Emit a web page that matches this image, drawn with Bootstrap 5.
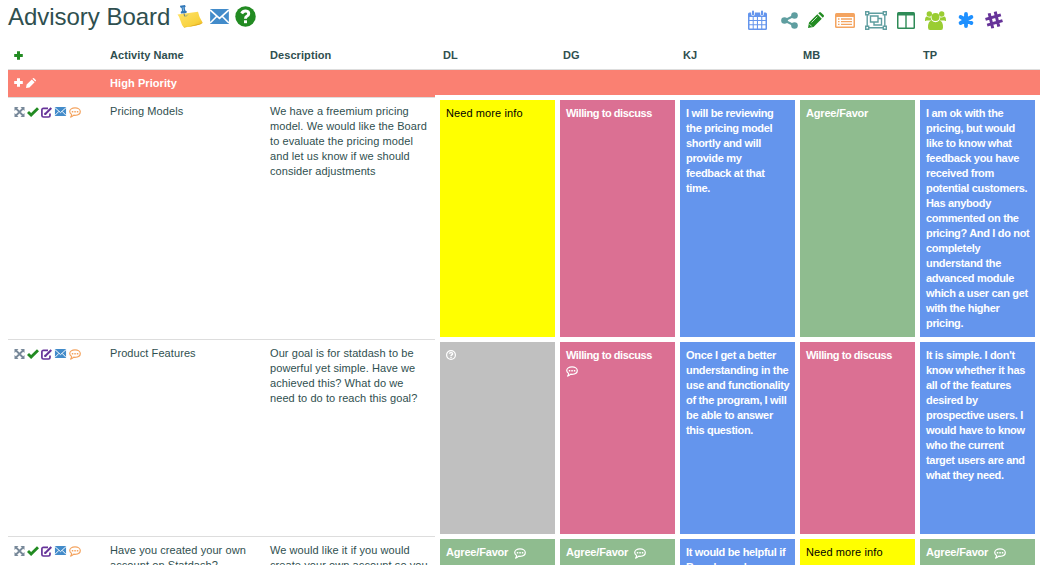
<!DOCTYPE html>
<html lang="en">
<head>
<meta charset="utf-8">
<title>Advisory Board</title>
<meta name="viewport" content="width=device-width, initial-scale=1">
<link rel="stylesheet" href="https://cdn.jsdelivr.net/npm/bootstrap@5.3.0/dist/css/bootstrap.min.css">
<style>
body{font-family:"Liberation Sans",Arial,sans-serif;font-size:11px;line-height:15px;color:#2f4f4f;background:#fff;height:565px;letter-spacing:.08px}
svg{display:block;flex:none;overflow:visible}
.page-top{height:40px;padding:0 37px 0 8px}
.board-title{font-size:24px;line-height:34px;letter-spacing:-.03px;width:163px;color:#2f4f4f}
.tools{height:40px}
.board-row{display:grid;grid-template-columns:102px 160px 165px repeat(4,120px) 125px;margin-left:8px;white-space:nowrap}
.head-row{height:29px;padding-top:8px;font-weight:bold}
.head-row .who{padding-left:8px}
.group-row{height:28px;border-top:1px solid #ddd;background:salmon;color:#fff;padding-top:6px;font-weight:bold}
.tall{height:242px}.mid{height:197px}.last{height:29px;overflow:hidden}
.meta{border-top:1px solid #ddd;padding-top:6px}
.acts{padding-left:6px;padding-top:9px;gap:2px}
.vote{border:solid #fff;border-width:5px 0 0 5px;margin-top:-2px;margin-bottom:2px;padding:6px 0 0 6px;font-weight:bold;color:#fff;letter-spacing:-.32px}
.last .vote{margin-top:0;border-top-width:3px;margin-bottom:0}
.vote:last-child{border-right-width:5px}
.more{background:#ff0;color:#000;font-weight:normal;letter-spacing:.1px}
.discuss{background:#db7093;letter-spacing:-.42px}.note{background:#6495ed}.agree{background:#8fbc8f;letter-spacing:-.18px}.none{background:#c0c0c0}
.unsure-icon{margin-top:2px}
</style>
<script src="https://cdn.jsdelivr.net/npm/bootstrap@5.3.0/dist/js/bootstrap.bundle.min.js"></script>
</head>
<body class="overflow-hidden">
<svg width="0" height="0" class="position-absolute">
<symbol id="plus" viewBox="0 0 9 9"><path fill="currentColor" d="M3 .3h3V3h2.800v3H6v2.700H3V6H.2V3H3z"/></symbol>
<symbol id="pencil" viewBox="0 0 16 16"><path fill="currentColor" d="M0 16l1-5.500L9.300 2.200l4.500 4.500L5.500 15zM10.300 1.300L11.200.4Q12 -.4 12.900.4L15.600 3.100Q16.400 4 15.600 4.800L14.800 5.700z"/></symbol>
<symbol id="move" viewBox="0 0 10 10"><path fill="none" stroke="#778899" stroke-width="1.800" d="M1 1l8 8M9 1L1 9"/><path fill="#778899" d="M0 0h4L0 4zM10 0v4L6 0zM0 10V6l4 4zM10 10H6l4-4z"/></symbol>
<symbol id="check" viewBox="0 0 12 10"><path fill="none" stroke="#228b22" stroke-width="2.900" d="M1 5l3.100 3L11 1.200"/></symbol>
<symbol id="edit" viewBox="0 0 11 11"><path fill="none" stroke="#663399" stroke-width="1.700" d="M7 1.300H2.500Q.9 1.300.9 3v5.500Q.9 10 2.500 10h5Q9 10 9 8.500V6.500"/><path stroke="#663399" stroke-width="2" d="M4 7.300L10.300 1"/><path fill="#663399" d="M3.300 5.500L5.500 8H3.300z"/></symbol>
<symbol id="mail" viewBox="0 0 20 16"><path fill="#428bca" d="M0 0h20v16H0z"/><path fill="none" stroke="#fff" stroke-width="1.700" d="M0 1l10 9L20 1M0 15l7.200-7.300M20 15l-7.200-7.300"/></symbol>
<symbol id="chat" viewBox="0 0 12 11"><path fill="none" stroke="currentColor" stroke-width="1.200" stroke-linejoin="round" d="M6 .8C9 .8 11.300 2.400 11.300 4.600S9 8.300 6 8.300L4.800 8.200Q3.500 9.700 1.600 10.100Q2.600 8.900 2.600 7.500C1.500 6.800.7 5.800.7 4.600C.7 2.400 3 .8 6 .8z"/><path fill="currentColor" d="M2.800 3.900h1.500v1.500H2.800zM5.300 3.900h1.500v1.500H5.300zM7.800 3.900h1.500v1.500H7.800z"/></symbol>
</svg>

<header class="page-top d-flex justify-content-between">
 <div class="d-flex">
  <h1 class="board-title text-nowrap m-0 fw-normal">Advisory Board</h1>
  <svg width="27" height="24" viewBox="0 0 27 24" style="margin:5px 0 0 6px"><defs><linearGradient id="paper" x1="0" y1="0" x2="1" y2="1"><stop offset="0" stop-color="#ffe36a"/><stop offset=".7" stop-color="#f8d23e"/><stop offset="1" stop-color="#e9ad18"/></linearGradient></defs><path fill="url(#paper)" d="M.5 9.500L21 6.800Q22 12.500 25.700 17.800Q24 20.500 7 22.600Q4.500 20 3.600 16Q2.700 12 .5 9.500z"/><path fill="#dba51b" d="M4 17Q5 20 7.200 22.600L25.700 18Q23 20.500 7 22Q5 20 4 17z"/><path fill="#b6bb70" d="M7 11l5-2-3 3z"/><path fill="#3278b9" d="M3 .7L8 0L8.700 1.700L7.700 2.500L8.300 5.400L9.800 6.300L9.400 8L4 8.600L3.700 7L5 5.800L4.600 3L3.200 2.300z"/><path stroke="#85b9e0" d="M6 2l.6 4"/><path stroke="#687d85" d="M7 8.300l.6 3"/></svg>
  <svg width="19" height="15" style="margin:9px 0 0 6px"><use href="#mail"/></svg>
  <svg width="21" height="21" viewBox="0 0 21 21" style="margin:6px 0 0 6px"><circle cx="10.500" cy="10.500" r="10.200" fill="#228b22"/><path fill="none" stroke="#fff" stroke-width="3" d="M6.700 7.500Q8 4.900 10.800 5.100Q13.800 5.400 13.700 7.800Q13.600 9.300 11.800 10.300Q10.500 11 10.500 12.700"/><path fill="#fff" d="M9 14.300h3v2.900H9z"/></svg>
 </div>
 <nav class="tools d-flex align-items-center">
  <svg width="19" height="20" viewBox="0 0 19 20"><path fill="#6495ed" d="M0 4q0-1.500 1.500-1.500h16Q19 2.500 19 4v14.500q0 1.500-1.500 1.500h-16Q0 20 0 18.500z"/><path fill="#fff" d="M1.500 7h3.200v3H1.500zm4.200 0h3.200v3H5.700zM10 7h3.200v3H10zm4.300 0h3.200v3h-3.200zM1.500 11h3.200v3.300H1.500zm4.200 0h3.200v3.300H5.700zm4.300 0h3.200v3.300H10zm4.300 0h3.200v3.300h-3.200zM1.500 15.300h3.200v3.300H1.500zm4.200 0h3.200v3.300H5.700zm4.300 0h3.200v3.300H10zm4.300 0h3.200v3.300h-3.200z"/><path stroke="#fff" stroke-width="3.600" stroke-linecap="round" d="M5 2v2.300M14 2v2.300"/><path stroke="#6495ed" stroke-width="2" stroke-linecap="round" d="M5 1.500v3M14 1.500v3"/></svg>
  <svg width="17" height="17" viewBox="0 0 17 17" style="margin-left:14px"><path fill="none" stroke="#5f9ea0" stroke-width="2.200" d="M13.500 3.500l-10 5 10 5"/><g fill="#5f9ea0"><circle cx="13.500" cy="3.500" r="3.300"/><circle cx="3.500" cy="8.500" r="3.300"/><circle cx="13.500" cy="13.500" r="3.300"/></g></svg>
  <svg width="16" height="16" viewBox="0 0 16 16" color="#228b22" style="margin-left:10px"><use href="#pencil"/><path stroke="#fff" opacity=".75" d="M3.500 10.500L9.300 4.700M1.500 12.200l2.300 2.300"/></svg>
  <svg width="20" height="15" viewBox="0 0 20 15" style="margin-left:11px"><rect width="20" height="15" rx="1.500" fill="#f4a460"/><path fill="#fff" d="M1.500 4h17v9.500h-17z"/><path stroke="#f4a460" stroke-width="1.300" d="M3 6h1.500M6 6h11M3 8.700h1.500M6 8.700h11M3 11.400h1.500M6 11.400h11"/></svg>
  <svg width="22" height="19" viewBox="0 0 22 19" style="margin-left:10px"><g fill="none" stroke="#5f9ea0" stroke-width="1.400"><path d="M4 2.200h14M4 16.800h14M2.200 4v11M19.800 4v11"/><path d="M.7.700h3v3h-3zM18.300.7h3v3h-3zM.7 15.300h3v3h-3zM18.300 15.300h3v3h-3zM5.500 5h7.500v6H5.500zM13 7.500h3.500v6.500H9V11"/></g></svg>
  <svg width="18" height="17" viewBox="0 0 18 17" style="margin-left:10px"><rect width="18" height="17" rx="1.500" fill="#2e8b57"/><path fill="#fff" d="M1.500 3.500h6.800v12H1.500zM9.700 3.500h6.800v12H9.700z"/></svg>
  <svg width="21" height="19" viewBox="0 0 21 19" style="margin-left:10px"><g fill="#9acd32"><circle cx="4.300" cy="3" r="2.700"/><circle cx="16.700" cy="3" r="2.700"/><circle cx="10.500" cy="6" r="4"/><path d="M0 9.500Q0 5.500 2 5.500Q4 7 5.700 6.200Q5.700 8.500 7 9.500H1.500Q0 10.500 0 9.500zM21 9.500Q21 5.500 19 5.500Q17 7 15.300 6.200Q15.300 8.500 14 9.500h5.500Q21 10.500 21 9.500zM5 19Q3 19 3 16.500Q3 10 6.500 9.500Q10.500 13 14.500 9.500Q18 10 18 16.500Q18 19 16 19z"/></g></svg>
  <svg width="16" height="16" viewBox="0 0 16 16" style="margin-left:12px"><path stroke="#1e90ff" stroke-width="3.800" stroke-linecap="round" d="M8 2v12M2.600 5l10.800 6M13.400 5L2.600 11"/></svg>
  <svg width="18" height="18" viewBox="0 0 18 18" style="margin:0 0 1px 11px"><g transform="rotate(-16 9 9)" fill="none" stroke="#663399" stroke-width="3"><path d="M6.200 1.200L5.500 16.600M12.500 1.200L11.800 16.600M1 6h16M1 12h16"/></g></svg>
 </nav>
</header>

<main>
<div class="board-row head-row">
 <div style="padding:3px 0 0 6px;color:#228b22"><svg width="9" height="9"><use href="#plus"/></svg></div>
 <div>Activity Name</div><div>Description</div>
 <div class="who">DL</div><div class="who">DG</div><div class="who">KJ</div><div class="who">MB</div><div class="who">TP</div>
</div>
<div class="board-row group-row">
 <div class="d-flex" style="padding:2px 0 0 6px;gap:3px"><svg width="9" height="9"><use href="#plus"/></svg><svg width="10" height="10"><use href="#pencil"/></svg></div>
 <div>High Priority</div>
</div>

<div class="board-row tall">
 <div class="meta acts d-flex align-items-start"><svg width="11" height="10"><use href="#move"/></svg><svg width="12" height="10"><use href="#check"/></svg><svg width="11" height="11"><use href="#edit"/></svg><svg width="13" height="9" viewBox="0 0 12 9"><use href="#mail" width="12" height="9"/></svg><svg width="12" height="11" color="#f4a460"><use href="#chat"/></svg></div>
 <div class="meta">Pricing Models</div>
 <div class="meta">We have a freemium pricing<br>model. We would like the Board<br>to evaluate the pricing model<br>and let us know if we should<br>consider adjustments</div>
 <div class="vote more">Need more info</div>
 <div class="vote discuss">Willing to discuss</div>
 <div class="vote note">I will be reviewing<br>the pricing model<br>shortly and will<br>provide my<br>feedback at that<br>time.</div>
 <div class="vote agree">Agree/Favor</div>
 <div class="vote note">I am ok with the<br>pricing, but would<br>like to know what<br>feedback you have<br>received from<br>potential customers.<br>Has anybody<br>commented on the<br>pricing? And I do not<br>completely<br>understand the<br>advanced module<br>which a user can get<br>with the higher<br>pricing.</div>
</div>

<div class="board-row mid">
 <div class="meta acts d-flex align-items-start"><svg width="11" height="10"><use href="#move"/></svg><svg width="12" height="10"><use href="#check"/></svg><svg width="11" height="11"><use href="#edit"/></svg><svg width="13" height="9" viewBox="0 0 12 9"><use href="#mail" width="12" height="9"/></svg><svg width="12" height="11" color="#f4a460"><use href="#chat"/></svg></div>
 <div class="meta">Product Features</div>
 <div class="meta">Our goal is for statdash to be<br>powerful yet simple. Have we<br>achieved this? What do we<br>need to do to reach this goal?</div>
 <div class="vote none"><svg width="10" height="10" viewBox="0 0 10 10" class="unsure-icon"><g fill="none" stroke="#fff"><circle cx="5" cy="5" r="4.400" stroke-width="1.200"/><path stroke-width="1.400" d="M3.300 3.700Q4 2.500 5.200 2.600Q6.700 2.700 6.600 3.900Q6.500 4.600 5.600 5Q5 5.300 5 6M5 6.800v1.200"/></g></svg></div>
 <div class="vote discuss">Willing to discuss<svg width="12" height="11" style="margin-top:3px"><use href="#chat"/></svg></div>
 <div class="vote note">Once I get a better<br>understanding in the<br>use and functionality<br>of the program, I will<br>be able to answer<br>this question.</div>
 <div class="vote discuss">Willing to discuss</div>
 <div class="vote note">It is simple. I don't<br>know whether it has<br>all of the features<br>desired by<br>prospective users. I<br>would have to know<br>who the current<br>target users are and<br>what they need.</div>
</div>

<div class="board-row last">
 <div class="meta acts d-flex align-items-start"><svg width="11" height="10"><use href="#move"/></svg><svg width="12" height="10"><use href="#check"/></svg><svg width="11" height="11"><use href="#edit"/></svg><svg width="13" height="9" viewBox="0 0 12 9"><use href="#mail" width="12" height="9"/></svg><svg width="12" height="11" color="#f4a460"><use href="#chat"/></svg></div>
 <div class="meta">Have you created your own<br>account on Statdash?</div>
 <div class="meta">We would like it if you would<br>create your own account so you</div>
 <div class="vote agree d-flex align-items-start">Agree/Favor<svg width="12" height="11" style="margin:3px 0 0 6px"><use href="#chat"/></svg></div>
 <div class="vote agree d-flex align-items-start">Agree/Favor<svg width="12" height="11" style="margin:3px 0 0 6px"><use href="#chat"/></svg></div>
 <div class="vote note">It would be helpful if<br>Board members</div>
 <div class="vote more">Need more info</div>
 <div class="vote agree d-flex align-items-start">Agree/Favor<svg width="12" height="11" style="margin:3px 0 0 6px"><use href="#chat"/></svg></div>
</div>
</main>
</body>
</html>
